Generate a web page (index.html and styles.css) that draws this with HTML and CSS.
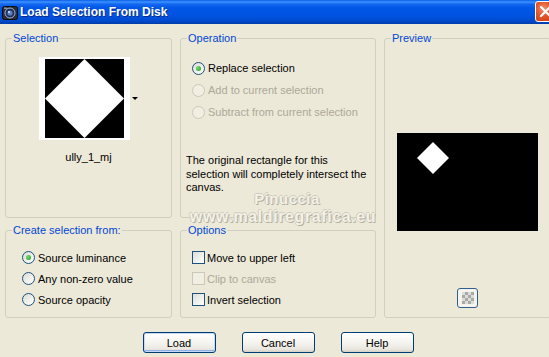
FILE: index.html
```html
<!DOCTYPE html>
<html lang="en">
<head>
    <meta charset="UTF-8">
    <title>Load Selection From Disk</title>
    <link rel="stylesheet" href="styles.css">
</head>
<body>
    <div class="window">
        <div class="titlebar">
            <svg class="app-icon" width="16" height="16" viewBox="0 0 16 16">
                <rect x="0.5" y="1.5" width="15" height="13" rx="2" fill="#2a2d33" stroke="#0b0c10"/>
                <circle cx="8" cy="8" r="5" fill="#1b2f5c" stroke="#9fb3d8" stroke-width="1"/>
                <circle cx="8" cy="8" r="2.6" fill="#5d7fc4"/>
                <circle cx="7" cy="7" r="1" fill="#dfe8ff"/>
                <rect x="2" y="2.5" width="3" height="1.5" fill="#8a8f99"/>
            </svg>
            <span class="title">Load Selection From Disk</span>
            <span class="close">
                <svg width="13" height="13" viewBox="0 0 13 13">
                    <path d="M2 2 L11 11 M11 2 L2 11" stroke="#fff" stroke-width="2.2" stroke-linecap="round"/>
                </svg>
            </span>
        </div>

        <div class="content">
            <fieldset class="group sel">
                <legend>Selection</legend>
                <div class="thumb-row">
                    <svg class="thumb" width="91" height="83" viewBox="0 0 91 83">
                        <rect width="91" height="83" fill="#fff"/>
                        <rect x="6" y="2" width="79" height="79" fill="#000"/>
                        <polygon points="45.5,2 85,41.5 45.5,81 6,41.5" fill="#fff"/>
                    </svg>
                    <span class="drop"></span>
                </div>
                <div class="thumb-name">ully_1_mj</div>
            </fieldset>

            <fieldset class="group op">
                <legend>Operation</legend>
                <div class="opt"><span class="radio on"></span>Replace selection</div>
                <div class="opt off"><span class="radio"></span>Add to current selection</div>
                <div class="opt off"><span class="radio"></span>Subtract from current selection</div>
                <p class="note">The original rectangle for this<br>selection will completely intersect the<br>canvas.</p>
            </fieldset>

            <fieldset class="group preview">
                <legend>Preview</legend>
                <svg class="canvas" width="141" height="98" viewBox="0 0 141 98">
                    <rect width="141" height="98" fill="#000"/>
                    <polygon points="36,9 52,25 36,41 20,25" fill="#fff"/>
                </svg>
                <span class="checker-btn"><span class="checker"></span></span>
            </fieldset>

            <fieldset class="group create">
                <legend>Create selection from:</legend>
                <div class="opt"><span class="radio on"></span>Source luminance</div>
                <div class="opt"><span class="radio"></span>Any non-zero value</div>
                <div class="opt"><span class="radio"></span>Source opacity</div>
            </fieldset>

            <fieldset class="group options">
                <legend>Options</legend>
                <div class="opt"><span class="check"></span>Move to upper left</div>
                <div class="opt off"><span class="check"></span>Clip to canvas</div>
                <div class="opt"><span class="check"></span>Invert selection</div>
            </fieldset>

            <div class="watermark">
                <span class="wm-name">Pinuccia</span>
                <span class="wm-site">www.maldiregrafica.eu</span>
            </div>
        </div>

        <div class="buttons">
            <button class="btn default">Load</button>
            <button class="btn">Cancel</button>
            <button class="btn">Help</button>
        </div>
    </div>
</body>
</html>
```

FILE: styles.css
```css
html, body {
    margin: 0;
    overflow: hidden;
}
body {
    font-family: "Liberation Sans", Arial, sans-serif;
    font-size: 11px;
    color: #000;
    background: #ece9d8;
}
/* the dialog is wider than the capture, so its right side is clipped */
.window {
    width: 549px;
    height: 357px;
    overflow: hidden;
    background: #ece9d8;
}

/* title bar */
.titlebar {
    height: 24px;
    display: flex;
    align-items: center;
    background: linear-gradient(#0a5ee8 0, #3c92ff 2px, #1467f0 4px, #0056e6 8px, #0053e1 16px, #0049cc 21px, #003ca8 24px);
}
.app-icon {
    flex: none;
    margin-left: 2px;
    margin-top: 1px;
}
.title {
    margin-left: 2px;
    color: #fff;
    font-weight: bold;
    font-size: 12px;
    text-shadow: 1px 1px 0 #0a2a8a;
    flex: 1;
}
.close {
    flex: none;
    box-sizing: border-box;
    width: 21px;
    height: 21px;
    margin-top: -1px;
    margin-right: -7px;
    border: 1px solid #fff;
    border-radius: 3px;
    background: radial-gradient(circle at 40% 35%, #f08e6e 0, #e2552b 45%, #c83a12 100%);
    display: flex;
    align-items: center;
    justify-content: center;
}

/* layout */
.content {
    position: relative;
    display: grid;
    grid-template-columns: 167px 196px 167px;
    grid-template-rows: 186px 94px;
    grid-template-areas:
        "sel op preview"
        "create options preview";
    column-gap: 8px;
    row-gap: 6px;
    padding: 8px 0 0 5px;
}
.group {
    margin: 0;
    padding: 0;
    min-width: 0;
    border: 1px solid #d0d0bf;
    border-radius: 3px;
}
.group legend {
    margin-left: 6px;
    padding: 0 1px;
    line-height: 13px;
    color: #0046d5;
}
.sel { grid-area: sel; }
.op { grid-area: op; }
.preview { grid-area: preview; }
.create { grid-area: create; }
.options { grid-area: options; }

/* selection */
.thumb-row {
    display: flex;
    align-items: center;
    justify-content: center;
    gap: 2px;
    margin-top: 12px;
}
.thumb { display: block; }
.drop {
    width: 0;
    height: 0;
    border-left: 3px solid transparent;
    border-right: 3px solid transparent;
    border-top: 3px solid #000;
    margin-top: -1px;
}
.thumb-name {
    text-align: center;
    line-height: 13px;
    margin-top: 11px;
}

/* option rows */
.opt {
    display: flex;
    align-items: center;
    gap: 3px;
}
.opt.off { color: #aca899; }
.op .opt {
    height: 22px;
    margin-left: 11px;
}
.op .opt:first-of-type { margin-top: 12px; }
.create .opt {
    height: 21px;
    margin-left: 16px;
}
.create .opt:first-of-type { margin-top: 10px; }
.options .opt {
    height: 21px;
    margin-left: 11px;
    gap: 2px;
}
.options .opt:first-of-type { margin-top: 10px; }

.radio {
    box-sizing: border-box;
    width: 13px;
    height: 13px;
    border: 1px solid #1c5180;
    border-radius: 50%;
    background: linear-gradient(135deg, #dcdcd4, #fff);
    display: flex;
    align-items: center;
    justify-content: center;
}
.radio.on::after {
    content: "";
    width: 5px;
    height: 5px;
    border-radius: 50%;
    background: radial-gradient(circle at 35% 35%, #73d873, #21a121);
}
.off .radio {
    border-color: #cac8bb;
    background: #f1efe2;
}
.check {
    box-sizing: border-box;
    width: 13px;
    height: 13px;
    border: 1px solid #1c5180;
    background: linear-gradient(135deg, #dcdcd7, #fff);
}
.off .check {
    border-color: #cac8bb;
    background: #f1efe2;
}

.note {
    margin: 31px 0 0 5px;
    line-height: 13.5px;
}

/* preview */
.preview {
    display: flex;
    flex-direction: column;
    align-items: center;
}
.canvas {
    display: block;
    margin-top: 88px;
}
.checker-btn {
    box-sizing: border-box;
    width: 21px;
    height: 20px;
    margin-top: auto;
    margin-bottom: 9px;
    border: 1px solid #315e8c;
    border-radius: 3px;
    background: #f4f3ee;
    display: flex;
    align-items: center;
    justify-content: center;
}
.checker {
    width: 12px;
    height: 12px;
    background-color: #dcdcd8;
    background-image:
        linear-gradient(45deg, #a9a9a5 25%, transparent 25%, transparent 75%, #a9a9a5 75%),
        linear-gradient(45deg, #a9a9a5 25%, transparent 25%, transparent 75%, #a9a9a5 75%);
    background-size: 6px 6px;
    background-position: 0 0, 3px 3px;
}

/* watermark over the operation box */
.watermark {
    position: absolute;
    left: 188px;
    top: 166px;
    width: 190px;
    display: flex;
    flex-direction: column;
    align-items: center;
    font-weight: bold;
    color: #f3f1e8;
    text-shadow: 1px 1px 0 #b4b0a0, -1px 0 0 #d0ccbc, 0 -1px 0 #d0ccbc;
    pointer-events: none;
}
.wm-name {
    font-size: 15px;
    line-height: 18px;
    letter-spacing: 0.5px;
    margin-left: 8px;
}
.wm-site {
    font-size: 16px;
    line-height: 18px;
    letter-spacing: 0.6px;
}

/* buttons: centred on the full (unclipped) dialog width */
.buttons {
    display: flex;
    justify-content: center;
    gap: 26px;
    margin-top: 14px;
    padding-left: 7px;
}
.btn {
    box-sizing: border-box;
    width: 73px;
    height: 21px;
    padding: 0;
    font-family: "Liberation Sans", Arial, sans-serif;
    font-size: 11px;
    color: #000;
    border: 1px solid #003c74;
    border-radius: 3px;
    background: linear-gradient(#fff 0, #f5f4ef 50%, #e9e7df 85%, #d6d0c5 100%);
}
.btn.default {
    box-shadow: inset 0 0 0 1px #c6d8f6, inset 0 -1px 0 1px #8fb0e8;
}
```
